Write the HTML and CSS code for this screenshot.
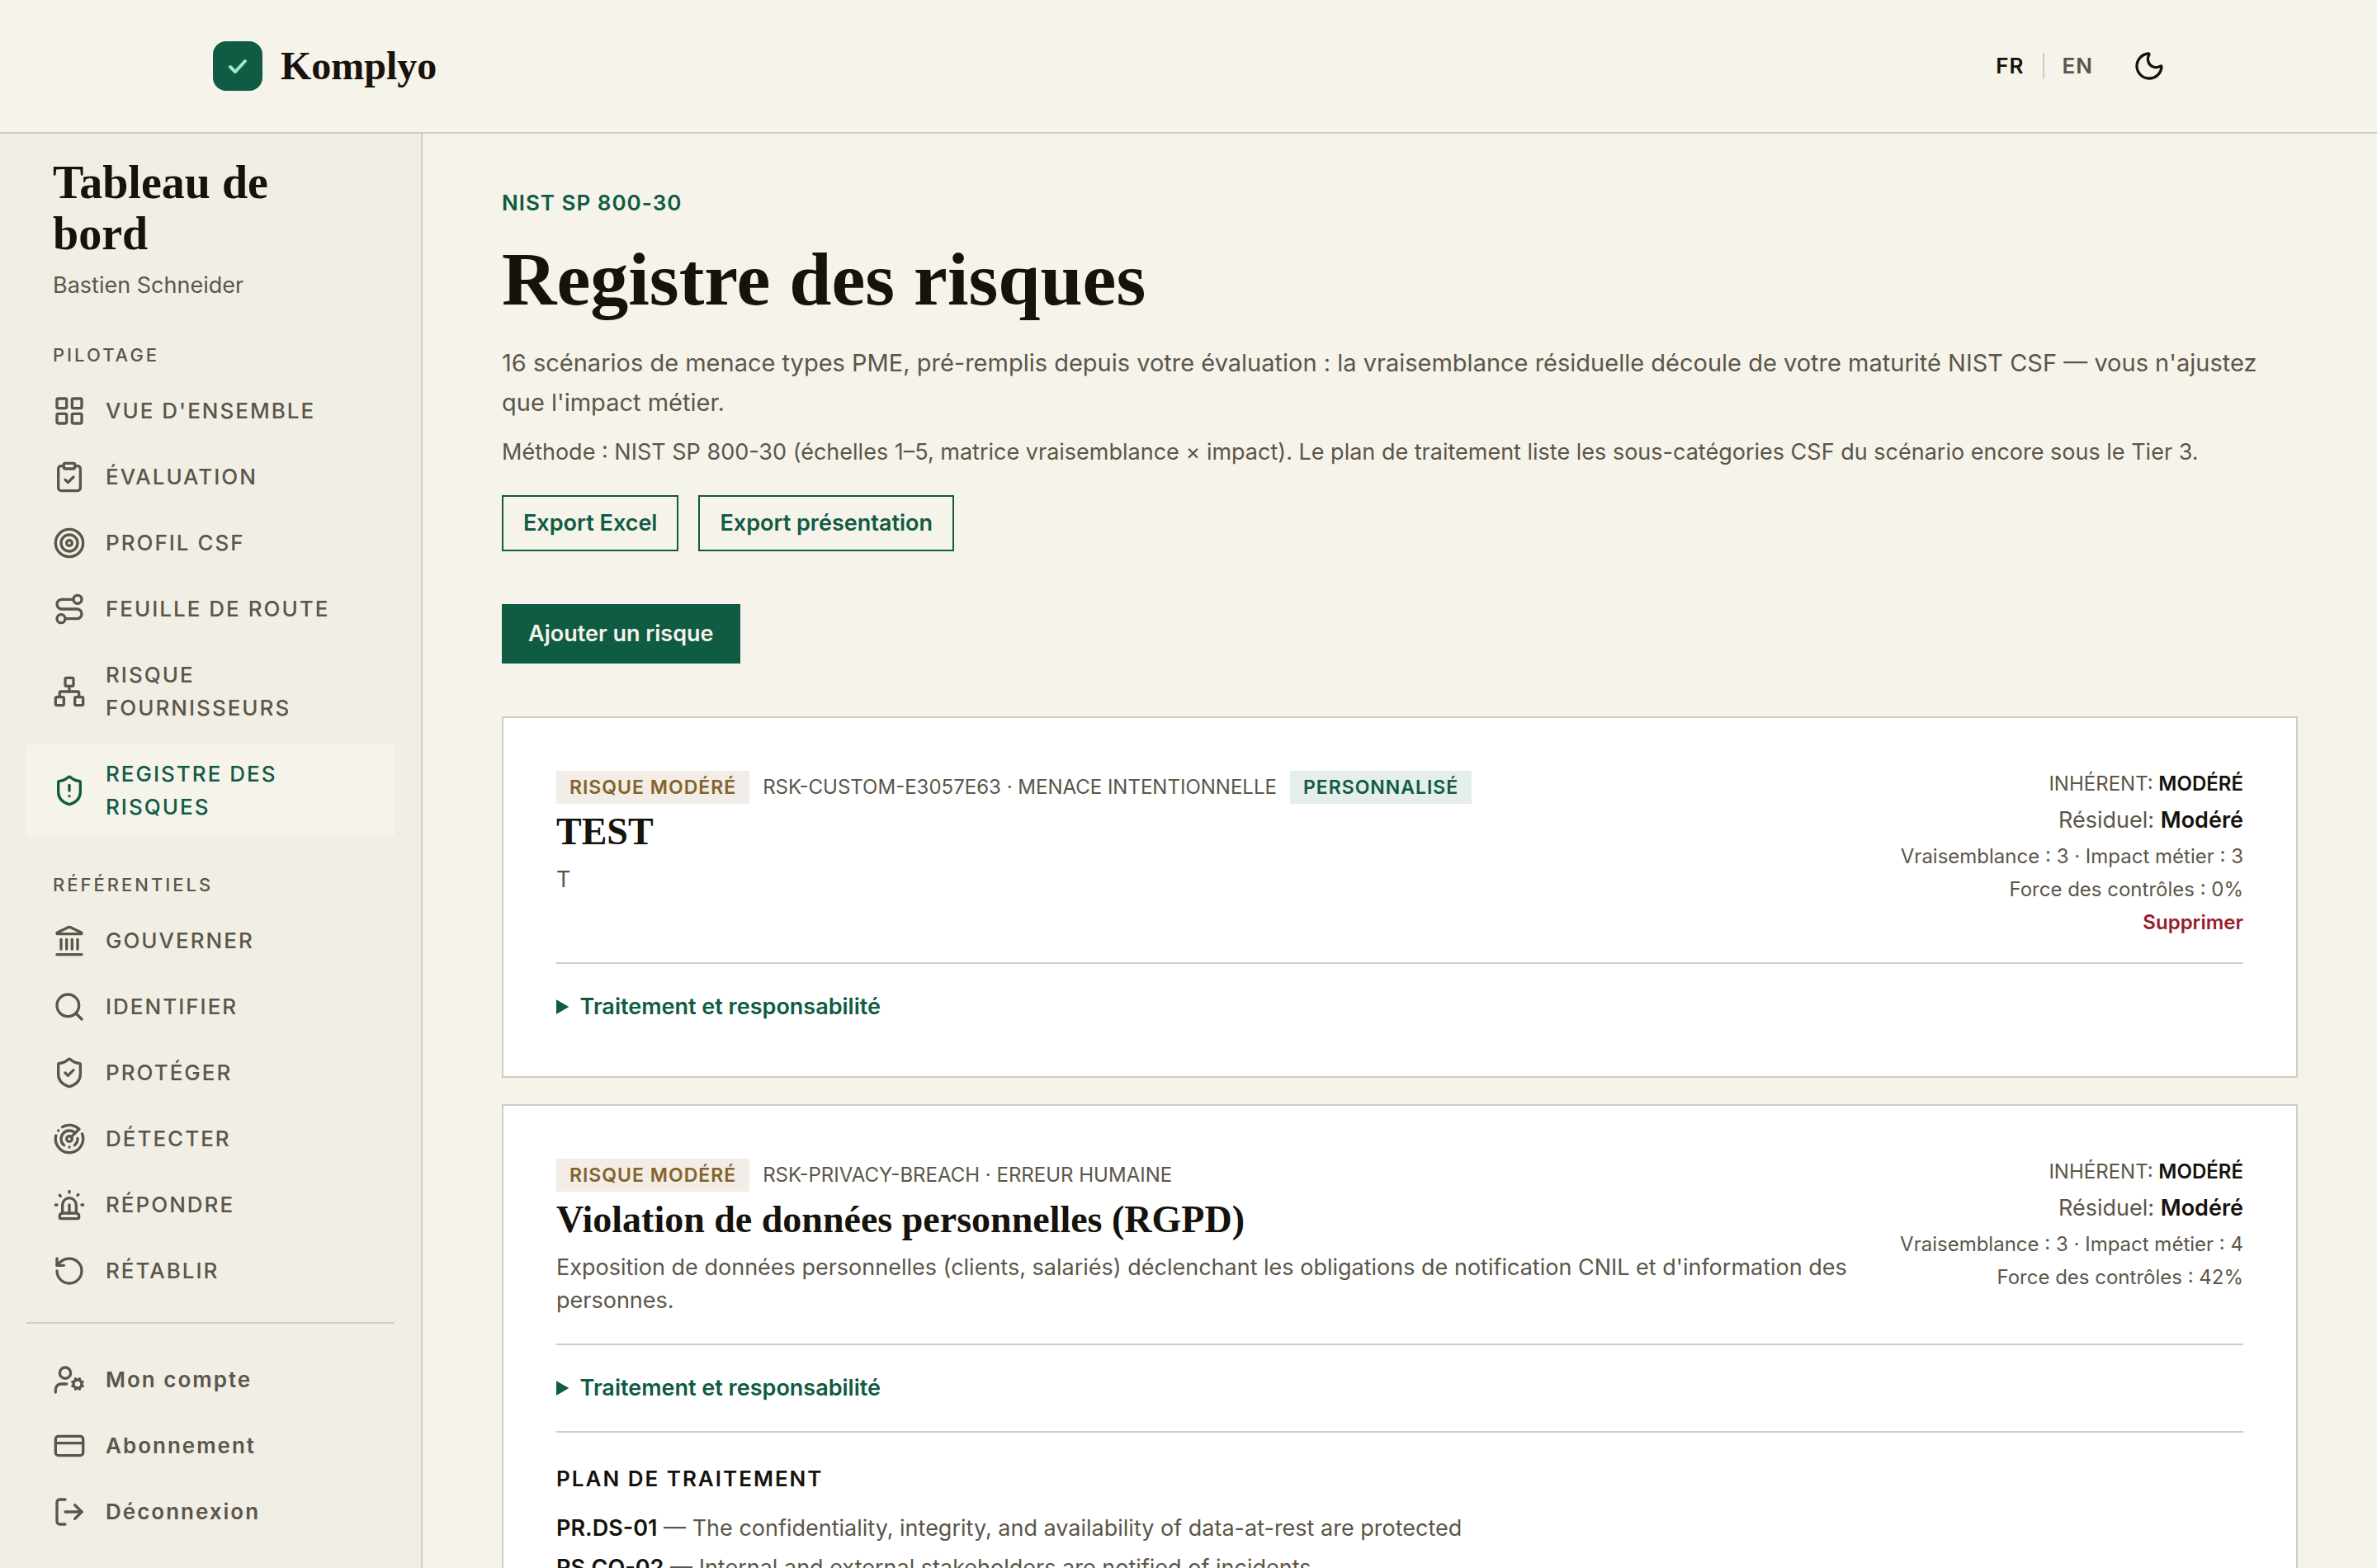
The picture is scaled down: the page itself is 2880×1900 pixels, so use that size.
FILE: index.html
```html
<!DOCTYPE html>
<html lang="fr">
<head>
<meta charset="utf-8">
<meta name="viewport" content="width=device-width, initial-scale=1">
<title>Registre des risques – Komplyo</title>
<link rel="stylesheet" href="styles.css">
</head>
<body>
<header class="topbar">
  <div class="topbar-inner">
    <a class="brand" href="#">
      <svg class="brand-mark" viewBox="0 0 64 64" aria-hidden="true"><rect x="2" y="2" width="60" height="60" rx="16" fill="#0f5b43"/><path d="M23 33l6 6 12-13" fill="none" stroke="#a0e8c4" stroke-width="4" stroke-linecap="round" stroke-linejoin="round"/></svg>
      <span>Komplyo</span>
    </a>
    <div class="tools">
      <div class="langs">
        <a class="lang lang-current" href="#">FR</a>
        <span class="lang-sep"></span>
        <a class="lang" href="#">EN</a>
      </div>
      <button class="theme-toggle" type="button" aria-label="Mode sombre">
        <svg class="icon" viewBox="0 0 24 24"><path d="M20.985 12.486a9 9 0 1 1-9.473-9.472c.405-.022.617.46.402.803a6 6 0 0 0 8.268 8.268c.344-.215.825-.004.803.401"/></svg>
      </button>
    </div>
  </div>
</header>

<div class="layout">
  <aside class="sidebar">
    <div class="side-head">
      <h2 class="side-title">Tableau de bord</h2>
      <p class="side-user">Bastien Schneider</p>
    </div>
    <nav class="side-nav">
      <section class="nav-group">
        <h3 class="nav-heading">PILOTAGE</h3>
        <a class="nav-item" href="#"><svg class="icon" viewBox="0 0 24 24"><rect x="3" y="3" width="7" height="7" rx="1"/><rect x="14" y="3" width="7" height="7" rx="1"/><rect x="14" y="14" width="7" height="7" rx="1"/><rect x="3" y="14" width="7" height="7" rx="1"/></svg><span>VUE D'ENSEMBLE</span></a>
        <a class="nav-item" href="#"><svg class="icon" viewBox="0 0 24 24"><rect x="8" y="2" width="8" height="4" rx="1"/><path d="M16 4h2a2 2 0 0 1 2 2v14a2 2 0 0 1-2 2H6a2 2 0 0 1-2-2V6a2 2 0 0 1 2-2h2"/><path d="m9 14 2 2 4-4"/></svg><span>ÉVALUATION</span></a>
        <a class="nav-item" href="#"><svg class="icon" viewBox="0 0 24 24"><circle cx="12" cy="12" r="10"/><circle cx="12" cy="12" r="6"/><circle cx="12" cy="12" r="2"/></svg><span>PROFIL CSF</span></a>
        <a class="nav-item" href="#"><svg class="icon" viewBox="0 0 24 24"><circle cx="6" cy="19" r="3"/><path d="M9 19h8.5a3.5 3.5 0 0 0 0-7h-11a3.5 3.5 0 0 1 0-7H15"/><circle cx="18" cy="5" r="3"/></svg><span>FEUILLE DE ROUTE</span></a>
        <a class="nav-item" href="#"><svg class="icon" viewBox="0 0 24 24"><rect x="16" y="16" width="6" height="6" rx="1"/><rect x="2" y="16" width="6" height="6" rx="1"/><rect x="9" y="2" width="6" height="6" rx="1"/><path d="M5 16v-3a1 1 0 0 1 1-1h12a1 1 0 0 1 1 1v3"/><path d="M12 12V8"/></svg><span>RISQUE FOURNISSEURS</span></a>
        <a class="nav-item nav-item-active" href="#" aria-current="page"><svg class="icon" viewBox="0 0 24 24"><path d="M20 13c0 5-3.5 7.5-7.66 8.95a1 1 0 0 1-.67-.01C7.5 20.5 4 18 4 13V6a1 1 0 0 1 1-1c2 0 4.5-1.2 6.24-2.72a1.17 1.17 0 0 1 1.52 0C14.51 3.81 17 5 19 5a1 1 0 0 1 1 1z"/><path d="M12 8v4"/><path d="M12 16h.01"/></svg><span>REGISTRE DES RISQUES</span></a>
      </section>
      <section class="nav-group">
        <h3 class="nav-heading">RÉFÉRENTIELS</h3>
        <a class="nav-item" href="#"><svg class="icon" viewBox="0 0 24 24"><path d="M10 18v-7"/><path d="M11.12 2.198a2 2 0 0 1 1.76.006l7.866 3.847c.476.233.31.949-.22.949H3.474c-.53 0-.695-.716-.22-.949z"/><path d="M14 18v-7"/><path d="M18 18v-7"/><path d="M3 22h18"/><path d="M6 18v-7"/></svg><span>GOUVERNER</span></a>
        <a class="nav-item" href="#"><svg class="icon" viewBox="0 0 24 24"><path d="m21 21-4.34-4.34"/><circle cx="11" cy="11" r="8"/></svg><span>IDENTIFIER</span></a>
        <a class="nav-item" href="#"><svg class="icon" viewBox="0 0 24 24"><path d="M20 13c0 5-3.5 7.5-7.66 8.95a1 1 0 0 1-.67-.01C7.5 20.5 4 18 4 13V6a1 1 0 0 1 1-1c2 0 4.5-1.2 6.24-2.72a1.17 1.17 0 0 1 1.52 0C14.51 3.81 17 5 19 5a1 1 0 0 1 1 1z"/><path d="m9 12 2 2 4-4"/></svg><span>PROTÉGER</span></a>
        <a class="nav-item" href="#"><svg class="icon" viewBox="0 0 24 24"><path d="M19.07 4.93A10 10 0 0 0 6.99 3.34"/><path d="M4 6h.01"/><path d="M2.29 9.62A10 10 0 1 0 21.31 8.35"/><path d="M16.24 7.76A6 6 0 1 0 8.23 16.67"/><path d="M12 18h.01"/><path d="M17.99 11.66A6 6 0 0 1 15.77 16.67"/><circle cx="12" cy="12" r="2"/><path d="m13.41 10.59 5.66-5.66"/></svg><span>DÉTECTER</span></a>
        <a class="nav-item" href="#"><svg class="icon" viewBox="0 0 24 24"><path d="M7 18v-6a5 5 0 1 1 10 0v6"/><path d="M5 21a1 1 0 0 0 1 1h12a1 1 0 0 0 1-1v-1a2 2 0 0 0-2-2H7a2 2 0 0 0-2 2z"/><path d="M21 12h1"/><path d="M18.5 4.5 18 5"/><path d="M2 12h1"/><path d="M12 2v1"/><path d="m4.929 4.929.707.707"/><path d="M12 12v6"/></svg><span>RÉPONDRE</span></a>
        <a class="nav-item" href="#"><svg class="icon" viewBox="0 0 24 24"><path d="M3 12a9 9 0 1 0 9-9 9.75 9.75 0 0 0-6.74 2.74L3 8"/><path d="M3 3v5h5"/></svg><span>RÉTABLIR</span></a>
      </section>
    </nav>
    <div class="side-foot">
      <a class="nav-item nav-item-plain" href="#"><svg class="icon" viewBox="0 0 24 24"><path d="M10 15H6a4 4 0 0 0-4 4v2"/><path d="m14.305 16.53.923-.382"/><path d="m15.228 13.852-.923-.383"/><path d="m16.852 12.228-.383-.923"/><path d="m16.852 17.772-.383.924"/><path d="m19.148 12.228.383-.923"/><path d="m19.53 18.696-.382-.924"/><path d="m20.772 13.852.924-.383"/><path d="m20.772 16.148.924.383"/><circle cx="18" cy="15" r="3"/><circle cx="9" cy="7" r="4"/></svg><span>Mon compte</span></a>
      <a class="nav-item nav-item-plain" href="#"><svg class="icon" viewBox="0 0 24 24"><rect x="2" y="5" width="20" height="14" rx="2"/><path d="M2 10h20"/></svg><span>Abonnement</span></a>
      <button class="nav-item nav-item-plain" type="button"><svg class="icon" viewBox="0 0 24 24"><path d="m16 17 5-5-5-5"/><path d="M21 12H9"/><path d="M9 21H5a2 2 0 0 1-2-2V5a2 2 0 0 1 2-2h4"/></svg><span>Déconnexion</span></button>
    </div>
  </aside>

  <main class="main">
    <p class="eyebrow">NIST SP 800-30</p>
    <h1 class="page-title">Registre des risques</h1>
    <p class="lead">16 scénarios de menace types PME, pré-remplis depuis votre évaluation : la vraisemblance résiduelle découle de votre maturité NIST CSF — vous n'ajustez que l'impact métier.</p>
    <p class="method">Méthode : NIST SP 800-30 (échelles 1–5, matrice vraisemblance × impact). Le plan de traitement liste les sous-catégories CSF du scénario encore sous le Tier 3.</p>
    <div class="exports">
      <button class="btn btn-outline" type="button">Export Excel</button>
      <button class="btn btn-outline" type="button">Export présentation</button>
    </div>
    <button class="btn btn-primary" type="button">Ajouter un risque</button>

    <div class="cards">
      <article class="card">
        <div class="card-top">
          <div class="card-info">
            <div class="tags"><span class="badge badge-level">RISQUE MODÉRÉ</span><span class="ref">RSK-CUSTOM-E3057E63 · MENACE INTENTIONNELLE</span><span class="badge badge-custom">PERSONNALISÉ</span></div>
            <h2 class="card-title">TEST</h2>
            <p class="card-desc">T</p>
          </div>
          <div class="scores">
            <p>INHÉRENT: <strong>MODÉRÉ</strong></p>
            <p class="residual">Résiduel: <strong>Modéré</strong></p>
            <p>Vraisemblance : 3 · Impact métier : 3</p>
            <p>Force des contrôles : 0%</p>
            <button class="delete" type="button">Supprimer</button>
          </div>
        </div>
        <details class="card-section">
          <summary class="summary">Traitement et responsabilité</summary>
        </details>
      </article>

      <article class="card">
        <div class="card-top">
          <div class="card-info">
            <div class="tags"><span class="badge badge-level">RISQUE MODÉRÉ</span><span class="ref">RSK-PRIVACY-BREACH · ERREUR HUMAINE</span></div>
            <h2 class="card-title">Violation de données personnelles (RGPD)</h2>
            <p class="card-desc">Exposition de données personnelles (clients, salariés) déclenchant les obligations de notification CNIL et d'information des personnes.</p>
          </div>
          <div class="scores">
            <p>INHÉRENT: <strong>MODÉRÉ</strong></p>
            <p class="residual">Résiduel: <strong>Modéré</strong></p>
            <p>Vraisemblance : 3 · Impact métier : 4</p>
            <p>Force des contrôles : 42%</p>
          </div>
        </div>
        <details class="card-section">
          <summary class="summary">Traitement et responsabilité</summary>
        </details>
        <section class="card-section">
          <h3 class="plan-title">PLAN DE TRAITEMENT</h3>
          <ul class="plan">
            <li><strong>PR.DS-01</strong> — The confidentiality, integrity, and availability of data-at-rest are protected</li>
            <li><strong>RS.CO-02</strong> — Internal and external stakeholders are notified of incidents</li>
          </ul>
        </section>
      </article>
    </div>
  </main>
</div>
</body>
</html>
```
FILE: styles.css
```css
:root {
  --paper: #f6f3eb;
  --paper-dim: #f1eee6;
  --ink: #16120c;
  --muted: #5b5649;
  --line: #d0cdc5;
  --green: #0f5b43;
  --serif: "Liberation Serif", serif;
}

* {
  box-sizing: border-box;
  margin: 0;
  padding: 0;
}

body {
  min-height: 100vh;
  display: flex;
  flex-direction: column;
  background: var(--paper);
  color: var(--muted);
  font-family: Inter, sans-serif;
  font-size: 27px;
  line-height: 40px;
}

a {
  color: inherit;
  text-decoration: none;
}

button {
  border: 0;
  background: none;
  color: inherit;
  font: inherit;
  cursor: pointer;
}

strong {
  color: var(--ink);
  font-weight: 600;
}

.icon {
  flex: none;
  width: 40px;
  height: 40px;
  fill: none;
  stroke: currentColor;
  stroke-width: 2;
  stroke-linecap: round;
  stroke-linejoin: round;
}

/* Top bar */

.topbar {
  border-bottom: 2px solid var(--line);
}

.topbar-inner {
  max-width: 2560px;
  height: 160px;
  margin: 0 auto;
  padding: 0 96px;
  display: flex;
  align-items: center;
  justify-content: space-between;
}

.brand {
  display: flex;
  align-items: center;
  gap: 20px;
  color: var(--ink);
  font-family: var(--serif);
  font-size: 48px;
  font-weight: 700;
}

.brand-mark {
  width: 64px;
  height: 64px;
}

.tools {
  display: flex;
  align-items: center;
  gap: 48px;
  color: var(--ink);
}

.langs {
  display: flex;
  align-items: center;
  gap: 22px;
}

.lang {
  color: var(--muted);
  font-size: 26px;
  font-weight: 600;
  letter-spacing: 1px;
}

.lang-current {
  color: var(--ink);
}

.lang-sep {
  width: 2px;
  height: 32px;
  background: var(--line);
}

.theme-toggle {
  display: flex;
}

/* Sidebar */

.layout {
  flex: 1;
  display: flex;
  align-items: flex-start;
}

.sidebar {
  flex: none;
  width: 512px;
  min-height: calc(100vh - 162px);
  padding: 28px 32px 32px;
  display: flex;
  flex-direction: column;
  align-self: stretch;
  background: var(--paper-dim);
  border-right: 2px solid var(--line);
}

.side-head {
  padding: 0 32px;
  margin-bottom: 48px;
}

.side-title {
  margin-bottom: 12px;
  color: var(--ink);
  font-family: var(--serif);
  font-size: 56px;
  font-weight: 700;
  line-height: 62px;
}

.side-nav {
  display: flex;
  flex-direction: column;
  gap: 42px;
}

.nav-group {
  display: flex;
  flex-direction: column;
  gap: 8px;
}

.nav-heading {
  margin-bottom: 8px;
  padding: 0 32px;
  font-size: 22px;
  font-weight: 500;
  line-height: 32px;
  letter-spacing: 3px;
}

.nav-item {
  display: flex;
  align-items: center;
  gap: 24px;
  padding: 16px 32px;
  font-size: 26px;
  font-weight: 500;
  letter-spacing: 2px;
  text-align: left;
}

.nav-item-active {
  background: var(--paper);
  color: var(--green);
}

.nav-item-plain {
  font-weight: 600;
}

.side-foot {
  margin-top: 26px;
  padding-top: 32px;
  display: flex;
  flex-direction: column;
  gap: 8px;
  border-top: 2px solid var(--line);
}

/* Main column */

.main {
  flex: 1;
  min-width: 0;
  padding: 64px 96px;
}

.eyebrow {
  color: var(--green);
  font-size: 26px;
  font-weight: 600;
  letter-spacing: 1px;
}

.page-title {
  margin: 24px 0 30px;
  color: var(--ink);
  font-family: var(--serif);
  font-size: 92px;
  font-weight: 700;
  line-height: 96px;
}

.lead {
  font-size: 29px;
  line-height: 48px;
}

.method {
  margin-top: 16px;
}

.exports {
  display: flex;
  gap: 24px;
  margin: 32px 0 64px;
}

.btn {
  font-weight: 600;
}

.btn-outline {
  padding: 12px 24px;
  border: 2px solid var(--green);
  color: var(--green);
}

.btn-primary {
  padding: 16px 32px;
  background: var(--green);
  color: var(--paper);
}

.cards {
  display: flex;
  flex-direction: column;
  gap: 32px;
  margin-top: 64px;
}

.card {
  padding: 64px;
  background: #fff;
  border: 2px solid var(--line);
}

.card-top {
  display: flex;
  justify-content: space-between;
  gap: 44px;
}

.card-info {
  flex: 1;
  min-width: 0;
}

.tags {
  display: flex;
  align-items: center;
  gap: 16px;
}

.badge {
  padding: 0 16px;
  font-size: 23px;
  font-weight: 600;
  letter-spacing: 1px;
}

.badge-level {
  background: #f2eee7;
  color: #85622a;
}

.badge-custom {
  background: #e5eeeb;
  color: var(--green);
}

.ref {
  font-size: 24px;
}

.card-title {
  margin: 4px 0 8px;
  color: var(--ink);
  font-family: var(--serif);
  font-size: 46px;
  font-weight: 700;
  line-height: 60px;
}

.scores {
  flex: none;
  display: flex;
  flex-direction: column;
  align-items: flex-end;
  gap: 8px;
  font-size: 24px;
  line-height: 32px;
}

.residual {
  font-size: 27px;
  line-height: 40px;
}

.delete {
  color: #96202a;
  font-weight: 600;
}

.card-section {
  margin-top: 32px;
  padding-top: 32px;
  border-top: 2px solid var(--line);
}

.summary {
  color: var(--green);
  font-weight: 600;
  cursor: pointer;
}

.plan-title {
  margin-bottom: 16px;
  color: var(--ink);
  font-size: 26px;
  font-weight: 600;
  line-height: 48px;
  letter-spacing: 2px;
}

.plan {
  display: flex;
  flex-direction: column;
  gap: 8px;
  list-style: none;
}
```
